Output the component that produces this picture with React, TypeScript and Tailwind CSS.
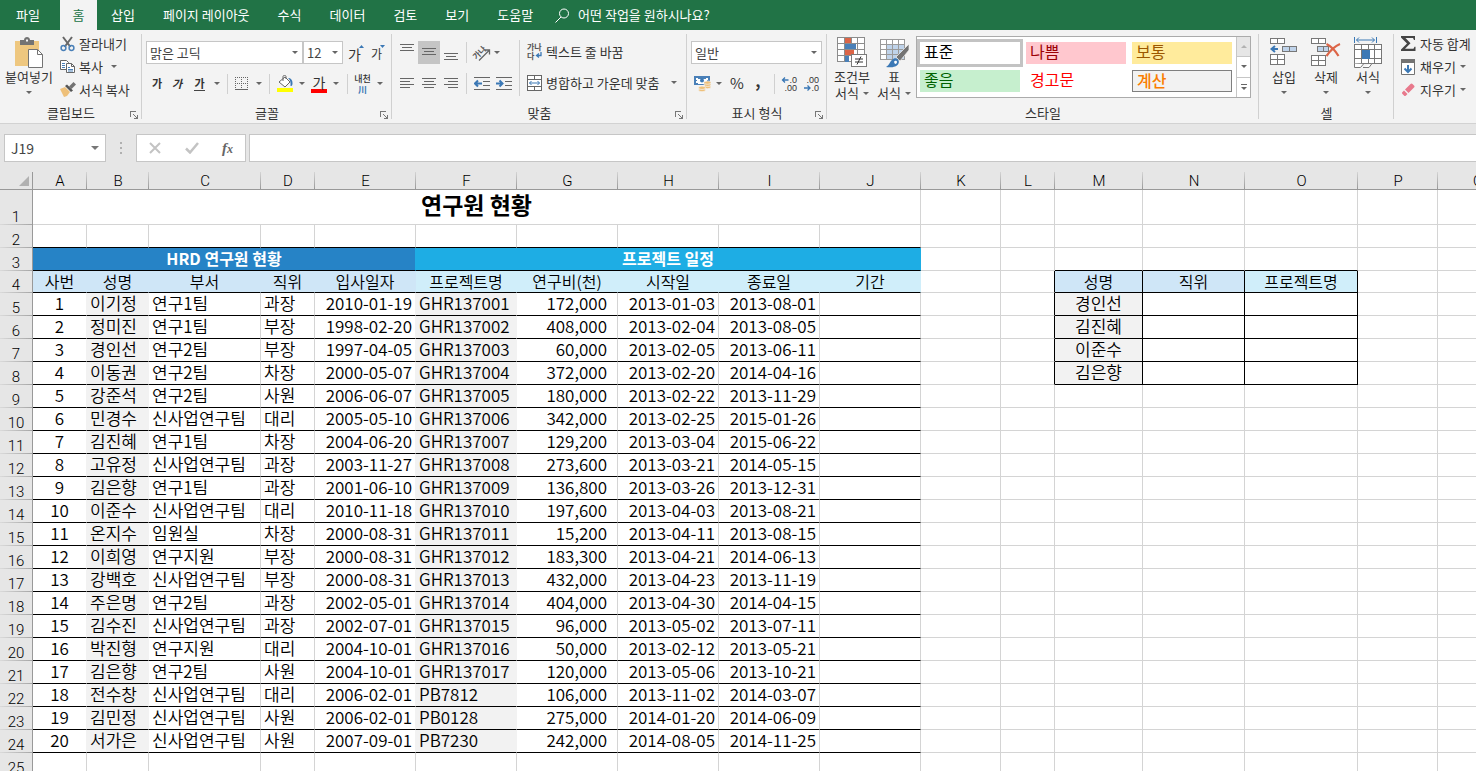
import type { ReactNode } from 'react';

type Researcher = [string, string, string, string, string, string, string, string];

const researchers: Researcher[] = [
  ['이기정', '연구1팀', '과장', '2010-01-19', 'GHR137001', '172,000', '2013-01-03', '2013-08-01'],
  ['정미진', '연구1팀', '부장', '1998-02-20', 'GHR137002', '408,000', '2013-02-04', '2013-08-05'],
  ['경인선', '연구2팀', '부장', '1997-04-05', 'GHR137003', '60,000', '2013-02-05', '2013-06-11'],
  ['이동권', '연구2팀', '차장', '2000-05-07', 'GHR137004', '372,000', '2013-02-20', '2014-04-16'],
  ['강준석', '연구2팀', '사원', '2006-06-07', 'GHR137005', '180,000', '2013-02-22', '2013-11-29'],
  ['민경수', '신사업연구팀', '대리', '2005-05-10', 'GHR137006', '342,000', '2013-02-25', '2015-01-26'],
  ['김진혜', '연구1팀', '차장', '2004-06-20', 'GHR137007', '129,200', '2013-03-04', '2015-06-22'],
  ['고유정', '신사업연구팀', '과장', '2003-11-27', 'GHR137008', '273,600', '2013-03-21', '2014-05-15'],
  ['김은향', '연구1팀', '과장', '2001-06-10', 'GHR137009', '136,800', '2013-03-26', '2013-12-31'],
  ['이준수', '신사업연구팀', '대리', '2010-11-18', 'GHR137010', '197,600', '2013-04-03', '2013-08-21'],
  ['온지수', '임원실', '차장', '2000-08-31', 'GHR137011', '15,200', '2013-04-11', '2013-08-15'],
  ['이희영', '연구지원', '부장', '2000-08-31', 'GHR137012', '183,300', '2013-04-21', '2014-06-13'],
  ['강백호', '신사업연구팀', '부장', '2000-08-31', 'GHR137013', '432,000', '2013-04-23', '2013-11-19'],
  ['주은명', '연구2팀', '과장', '2002-05-01', 'GHR137014', '404,000', '2013-04-30', '2014-04-15'],
  ['김수진', '신사업연구팀', '과장', '2002-07-01', 'GHR137015', '96,000', '2013-05-02', '2013-07-11'],
  ['박진형', '연구지원', '대리', '2004-10-01', 'GHR137016', '50,000', '2013-02-12', '2013-05-21'],
  ['김은향', '연구2팀', '사원', '2004-10-01', 'GHR137017', '120,000', '2013-05-06', '2013-10-21'],
  ['전수창', '신사업연구팀', '대리', '2006-02-01', 'PB7812', '106,000', '2013-11-02', '2014-03-07'],
  ['김민정', '신사업연구팀', '사원', '2006-02-01', 'PB0128', '275,000', '2014-01-20', '2014-06-09'],
  ['서가은', '신사업연구팀', '사원', '2007-09-01', 'PB7230', '242,000', '2014-08-05', '2014-11-25'],
];

const lookupNames = ['경인선', '김진혜', '이준수', '김은향'];
const columns = 'ABCDEFGHIJKLMNOPQ'.split('');
const tabs = ['삽입', '페이지 레이아웃', '수식', '데이터', '검토', '보기', '도움말'];

function Arrow({ className = '' }: { className?: string }) {
  return (
    <svg width="6" height="3" viewBox="0 0 6 3" className={`shrink-0 fill-[#666] ${className}`}>
      <path d="M0 0h6L3 3z" />
    </svg>
  );
}

function Divider({ className = 'h-5' }: { className?: string }) {
  return <span className={`w-px shrink-0 bg-[#d0d0d0] ${className}`} />;
}

function Group({ label, className, launcher = true, children }: { label: string; className: string; launcher?: boolean; children: ReactNode }) {
  return (
    <section aria-label={label} className={`relative flex shrink-0 flex-col ${className}`}>
      <div className="flex h-[74px] pt-[2px]">{children}</div>
      <div className="text-center leading-5">{label}</div>
      <span className="absolute top-1 right-0 h-[85px] w-px bg-[#d0d0d0]" />
      {launcher && (
        <button aria-label={`${label} 설정`} className="absolute right-1 bottom-1">
          <svg width="8" height="8" viewBox="0 0 8 8" fill="none" stroke="#777" shapeRendering="crispEdges">
            <path d="M.5 6V.5H6M3 3l4 4M7.5 3.5v4h-4" />
          </svg>
        </button>
      )}
    </section>
  );
}

/* clipboard icons */
function PasteIcon() {
  return (
    <svg width="30" height="32" viewBox="0 0 30 32">
      <path d="M1 4h24v25H1z" fill="#eec77f" />
      <path d="M6 3h4c0-4 6-4 6 0h4v5H6z" fill="#737373" />
      <path d="M12 2.500h2v2h-2z" fill="#f3f3f3" />
      <path d="M14.500 12.500h9l5 5v13h-14z" fill="#fff" stroke="#737373" />
      <path d="M23.500 12.500v5h5" fill="none" stroke="#737373" />
    </svg>
  );
}

function CutIcon() {
  return (
    <svg width="16" height="16" viewBox="0 0 16 16" fill="none">
      <path d="M3 1l7.500 10M12 1L4.500 11" stroke="#666" strokeWidth="2" />
      <circle cx="3.500" cy="12" r="2.400" stroke="#4a80b8" strokeWidth="1.500" />
      <circle cx="11.500" cy="12" r="2.400" stroke="#4a80b8" strokeWidth="1.500" />
    </svg>
  );
}

function CopyIcon() {
  return (
    <svg width="16" height="15" viewBox="0 0 16 15" fill="#fff" stroke="#666">
      <path d="M.5 1.500h6l2 2v7h-8z" />
      <path d="M2 4.500h3M2 6.500h3M2 8.500h3" stroke="#4a80b8" />
      <path d="M6.500 4.500h5l3 3v6h-8z" />
      <path d="M11.500 4.500v3h3" fill="none" />
      <path d="M8 8.500h2M8 10.500h5M8 12h5" stroke="#4a80b8" />
    </svg>
  );
}

function BrushIcon() {
  return (
    <svg width="16" height="15" viewBox="0 0 16 15">
      <path d="M0 7l5-2 5 5-3 4-3 1z" fill="#eec07a" />
      <path d="M5 4l2-1.500 6 6L11 10z" fill="#555" />
      <path d="M9 4.500L13.500 0 16 2.500 11.500 7z" fill="#737373" />
    </svg>
  );
}

/* horizontal strokes, each given as [x, y, length] */
function LinesIcon({ lines }: { lines: number[][] }) {
  return (
    <svg width="14" height="15" viewBox="0 0 14 15" stroke="#666" shapeRendering="crispEdges">
      {lines.map(([x, y, w]) => (
        <path key={y} d={`M${x} ${y}.5h${w}`} />
      ))}
    </svg>
  );
}

function IndentIcon({ right = false }: { right?: boolean }) {
  return (
    <svg width="17" height="14" viewBox="0 0 17 14">
      <path d="M0 .5h16M9 4.500h7M9 8.500h7M0 12.500h16" stroke="#666" shapeRendering="crispEdges" />
      <path d={right ? 'M0 6.500h6M3.500 3.500l3 3-3 3' : 'M1.500 6.500H8M4 3.500l-3 3 3 3'} fill="none" stroke="#3b78b5" strokeWidth="2" />
    </svg>
  );
}

function OrientationIcon() {
  return (
    <svg width="17" height="16" viewBox="0 0 17 16" className="overflow-visible">
      <text x="-2" y="11" fontSize="8" fontWeight="bold" fill="#555" transform="rotate(-45 5 8)">가나</text>
      <path d="M5 15.500L15 5.500M11 5h4.500v4.500" fill="none" stroke="#666" strokeWidth="1.300" />
    </svg>
  );
}

function WrapIcon() {
  return (
    <svg width="16" height="17" viewBox="0 0 16 17" className="overflow-visible">
      <text x="0" y="7" fontSize="8" fontWeight="bold" fill="#555">가나</text>
      <text x="0" y="16" fontSize="8" fontWeight="bold" fill="#555">다</text>
      <path d="M14 9v3.500h-4M12 10.500l-2.500 2 2.500 2" fill="none" stroke="#3b78b5" strokeWidth="1.300" />
    </svg>
  );
}

function MergeIcon() {
  return (
    <svg width="16" height="16" viewBox="0 0 16 16">
      <path d="M.5.5h14v15H.5zM.5 4.500h14M.5 11.500h14M7.500.5v4M7.500 11.500v4" fill="#fff" stroke="#666" shapeRendering="crispEdges" />
      <path d="M2.500 8h10M4.500 6l-2 2 2 2M10.500 6l2 2-2 2" fill="none" stroke="#3b78b5" />
    </svg>
  );
}

function BorderIcon() {
  return (
    <svg width="14" height="14" viewBox="0 0 14 14" fill="none" stroke="#666" shapeRendering="crispEdges">
      <path d="M.5 0v12M6.500 0v12M12.500 0v12M0 .5h13M0 6.500h13" strokeDasharray="1 1" />
      <path d="M0 12.500h13" />
    </svg>
  );
}

function FillIcon() {
  return (
    <svg width="16" height="17" viewBox="0 0 16 17">
      <path d="M2 7l6-5 5 5-5 5z" fill="#fff" stroke="#666" />
      <path d="M6 6V1.500c0-1.500 3-1.500 3 0V4" fill="none" stroke="#666" />
      <path d="M11 3c3 0 4.500 2 4.500 5s-1 3-2 3c0-3 .5-5-2.500-8z" fill="#3b78b5" />
      <path d="M0 13h16v4H0z" fill="#ff0" />
    </svg>
  );
}

function MoneyIcon() {
  return (
    <svg width="18" height="17" viewBox="0 0 18 17">
      <path d="M0 1h16v9H0z" fill="#4a80b8" />
      <path d="M2 3h2v1h8V3h2v2h-1v2h-3v2H4V8H2V6h1V5H2z" fill="#fff" />
      <circle cx="8" cy="5.500" r="2" fill="#3b78b5" />
      <g fill="#eec07a" stroke="#f3f3f3" strokeWidth=".7">
        <ellipse cx="13.500" cy="12" rx="3.500" ry="1.700" />
        <ellipse cx="13.500" cy="9.800" rx="3.500" ry="1.700" />
        <ellipse cx="13.500" cy="7.600" rx="3.500" ry="1.700" />
        <ellipse cx="8" cy="15" rx="3.500" ry="1.700" />
        <ellipse cx="8" cy="12.800" rx="3.500" ry="1.700" />
      </g>
    </svg>
  );
}

function DecimalIcon({ less = false }: { less?: boolean }) {
  return (
    <svg width="16" height="16" viewBox="0 0 16 16" className="overflow-visible font-[Liberation_Sans,sans-serif]">
      <text x="15" y="7" fontSize="9" textAnchor="end" fill="#333">{less ? '.00' : '.0'}</text>
      <text x="15" y="15" fontSize="9" textAnchor="end" fill="#333">{less ? '.0' : '.00'}</text>
      <path d={less ? 'M0 12h6M3.500 9.500L6 12l-2.500 2.500' : 'M.5 4h6M3 1.500L.5 4 3 6.500'} fill="none" stroke="#3b78b5" strokeWidth="1.300" />
    </svg>
  );
}

function ConditionalIcon() {
  return (
    <svg width="31" height="31" viewBox="0 0 31 31" shapeRendering="crispEdges">
      <path d="M.5.5h27v24H.5z" fill="#fff" />
      <path d="M.5.5h27v24H.5zM.5 6.500h27M.5 12.500h27M.5 18.500h27M7.500 0v25M14.500 0v25M20.500 0v25" fill="none" stroke="#8c8c8c" />
      <path d="M8 1h6v5H8zM8 13h9v5H8z" fill="#dc6547" />
      <path d="M8 7h11v5H8zM8 19h4v6H8z" fill="#4a80b8" />
      <path d="M14.500 17.500h15v12h-15z" fill="#fff" stroke="#7a7a7a" />
      <path d="M18 22h8M18 25h8M24 19.500l-4 8" stroke="#333" shapeRendering="auto" />
    </svg>
  );
}

function TableStyleIcon() {
  return (
    <svg width="31" height="31" viewBox="0 0 31 31">
      <path d="M1 2h24v20H1z" fill="#fff" />
      <path d="M7 8h18v14H7z" fill="#bfd3ea" />
      <path d="M1.500 2.500h24v20h-24zM1.500 7.500h24M1.500 12.500h24M1.500 17.500h24M7.500 2.500v20M13.500 2.500v20M19.500 2.500v20" fill="none" stroke="#9a9a9a" shapeRendering="crispEdges" />
      <path d="M30 7v6l-9 11-4-4z" fill="#737373" stroke="#f3f3f3" strokeWidth=".7" />
      <path d="M7 30c4-2 4-7 8-8.500 3-1 6 2 4.500 5C18 30 12 31 7 30z" fill="#3b78b5" />
      <path d="M15 25c1-2 3-1 3 0s-1 2-2 2z" fill="#fff" />
    </svg>
  );
}

function InsertCellsIcon() {
  return (
    <svg width="28" height="31" viewBox="0 0 28 31" fill="#fff" stroke="#777" shapeRendering="crispEdges">
      <path d="M.5 1.500h14v5H.5zM7.500 1.500v5M.5 17.500h14v10H.5zM.5 22.500h14M7.500 17.500v10" />
      <path d="M12.500 9.500h14v5h-14zM19.500 9.500v5" fill="#bfd3ea" />
      <path d="M2 12h6M5 9l-3.500 3L5 15" fill="none" stroke="#3b78b5" strokeWidth="2" shapeRendering="auto" />
    </svg>
  );
}

function DeleteCellsIcon() {
  return (
    <svg width="30" height="31" viewBox="0 0 30 31" fill="#fff" stroke="#777">
      <path d="M.5 1.500h14v5H.5zM7.500 1.500v5M.5 18.500h14v10H.5zM.5 23.500h14M7.500 18.500v10" shapeRendering="crispEdges" />
      <path d="M6.500 9.500h11v5h-11zM12.500 9.500v5" fill="#bfd3ea" shapeRendering="crispEdges" />
      <path d="M15.500 7c4 2 9 7 12 12M29 7c-5 2-10 7-13.500 12" fill="none" stroke="#dc6547" strokeWidth="2.200" />
    </svg>
  );
}

function FormatCellsIcon() {
  return (
    <svg width="29" height="32" viewBox="0 0 29 32" fill="#fff" stroke="#777">
      <path d="M.5 7.500h27v19H.5zM.5 12.500h27M.5 21.500h27M7.500 7.500v19M14.500 7.500v5M20.500 7.500v19M14.500 21.500v5" shapeRendering="crispEdges" />
      <path d="M8 13h8v9H8z" fill="#3b78b5" stroke="none" />
      <path d="M.5 26.500v4h6l3-3.500M9 30.500h6l3-4" />
      <path d="M.5 0v6M22.500 0v6M2.500 3h18M5 .5L2.500 3 5 5.500M18 .5L20.500 3 18 5.500" fill="none" stroke="#3b78b5" />
    </svg>
  );
}

function SumIcon() {
  return (
    <svg width="16" height="15" viewBox="0 0 16 15">
      <path d="M0 0h14v4h-1l-1-2H4.500l5 5.300L4 12.800h8.500l1-2h1V15H0v-1.500L6 7.500 0 1.500z" fill="#444" />
    </svg>
  );
}

function FillDownIcon() {
  return (
    <svg width="14" height="16" viewBox="0 0 14 16">
      <path d="M.5.5h13v15H.5z" fill="#fff" stroke="#737373" />
      <path d="M0 0h14v4H0z" fill="#737373" />
      <path d="M7 6v7M3.500 9.500L7 13l3.500-3.500" fill="none" stroke="#3b78b5" strokeWidth="2" />
    </svg>
  );
}

function EraserIcon() {
  return (
    <svg width="14" height="14" viewBox="0 0 14 14" fill="#e8798c">
      <path d="M4 6.500L9.500 1c.7-.7 1.500-.7 2 0l1.500 1.500c.7.600.7 1.300 0 2L7.500 10z" />
      <path d="M3 7.500L6.500 11 5 12.500c-.7.700-1.500.7-2 0L1.500 11c-.7-.6-.7-1.300 0-2z" />
    </svg>
  );
}

function BigButton({ icon, lines, inline = false, className }: { icon: ReactNode; lines: string[]; inline?: boolean; className: string }) {
  return (
    <button className={`flex shrink-0 flex-col items-center pt-[5px] leading-4 ${className}`}>
      <span className="flex h-8 items-start">{icon}</span>
      <span className="whitespace-nowrap">{lines[0]}</span>
      {inline ? (
        <span className="flex items-center gap-1">
          {lines[1]} <Arrow />
        </span>
      ) : (
        <Arrow className="mt-[6px]" />
      )}
    </button>
  );
}

function SmallButton({ icon, label, arrow = false }: { icon: ReactNode; label: string; arrow?: boolean }) {
  return (
    <button className="flex h-[23px] items-center whitespace-nowrap">
      <span className="flex w-[19px] items-center">{icon}</span>
      {label}
      {arrow && <Arrow className="ml-1" />}
    </button>
  );
}

function Combo({ label, value, className }: { label: string; value: string; className: string }) {
  return (
    <span className={`relative flex h-[23px] items-center border border-[#c6c6c6] bg-white ${className}`}>
      <select aria-label={label} className="h-full w-full appearance-none bg-transparent pl-[3px] text-[#444] outline-none">
        <option>{value}</option>
      </select>
      <Arrow className="pointer-events-none absolute right-1" />
    </span>
  );
}

function Ribbon() {
  return (
    <div className="flex h-[94px] overflow-hidden border-b border-[#d2d2d2] bg-[#f3f3f3] text-[#333]">
      <Group label="클립보드" className="w-[142px]">
        <BigButton icon={<PasteIcon />} lines={['붙여넣기']} className="w-[58px]" />
        <div className="flex flex-col pl-[2px]">
          <SmallButton icon={<CutIcon />} label="잘라내기" />
          <button className="flex h-[23px] items-center">
            <span className="flex w-[19px]"><CopyIcon /></span>
            복사
            <Arrow className="ml-2" />
          </button>
          <SmallButton icon={<BrushIcon />} label="서식 복사" />
        </div>
      </Group>

      <Group label="글꼴" className="w-[250px]">
        <div className="flex flex-col pl-1">
          <div className="mt-[9px] flex">
            <Combo label="글꼴" value="맑은 고딕" className="w-[157px]" />
            <Combo label="글꼴 크기" value="12" className="w-10" />
            <button className="relative ml-[5px] w-4 pt-[2px] text-left text-sm" aria-label="글꼴 크기 크게">
              가
              <svg width="5" height="3" className="absolute top-1 right-0 fill-[#3b78b5]"><path d="M0 3h5L2.500 0z" /></svg>
            </button>
            <button className="relative ml-[7px] w-4 pt-[3px] text-left text-xs" aria-label="글꼴 크기 작게">
              가
              <svg width="5" height="3" className="absolute top-1 right-[2px] fill-[#3b78b5]"><path d="M0 0h5L2.500 3z" /></svg>
            </button>
          </div>
          <div className="mt-2 flex h-[23px] items-center pl-1">
            <button className="w-[22px] pr-2 text-[11px] font-bold">가</button>
            <button className="w-[22px] pr-3 text-[11px] font-bold italic">가</button>
            <button className="mr-3 w-[11px] border-b border-[#444] text-[11px] leading-[13px] font-bold">가</button>
            <Arrow className="-ml-[3px]" />
            <Divider className="mr-[7px] ml-[7px] h-5" />
            <button aria-label="테두리"><BorderIcon /></button>
            <Arrow className="mx-[7px]" />
            <Divider />
            <button aria-label="채우기 색" className="ml-[7px]"><FillIcon /></button>
            <Arrow className="mx-[6px]" />
            <button aria-label="글꼴 색" className="w-4 border-b-4 border-[#f00] text-sm leading-[14px]">가</button>
            <Arrow className="mr-2 ml-[6px]" />
            <Divider />
            <button className="ml-[6px] flex w-[17px] flex-col items-center text-[9px] leading-[11px] font-medium whitespace-nowrap">
              내천
              <span className="font-bold text-[#3b78b5]">川</span>
            </button>
            <Arrow className="ml-[6px]" />
          </div>
        </div>
      </Group>

      <Group label="맞춤" className="w-[295px]">
        <div className="flex flex-col pl-1">
          <div className="mt-[9px] flex h-[23px] items-center">
            <button aria-label="위쪽 맞춤" className="flex h-[23px] w-[22px] justify-center pt-[3px]"><LinesIcon lines={[[0, 0, 14], [2, 3, 10], [0, 6, 14]]} /></button>
            <button aria-label="가운데 맞춤" className="flex h-[23px] w-[22px] justify-center bg-[#c5c5c5] pt-[3px]"><LinesIcon lines={[[0, 4, 14], [2, 7, 10], [0, 10, 14]]} /></button>
            <button aria-label="아래쪽 맞춤" className="flex h-[23px] w-[22px] items-end justify-center pb-px"><LinesIcon lines={[[0, 5, 14], [2, 8, 10], [0, 11, 14]]} /></button>
            <Divider className="mr-[7px] ml-1 h-[21px]" />
            <button aria-label="방향"><OrientationIcon /></button>
            <Arrow className="ml-[3px]" />
          </div>
          <div className="mt-2 flex h-[23px] items-center">
            <button aria-label="왼쪽 맞춤" className="flex w-[22px] justify-center"><LinesIcon lines={[[0, 2, 14], [0, 5, 10], [0, 8, 14], [0, 11, 10]]} /></button>
            <button aria-label="가로 가운데 맞춤" className="flex w-[22px] justify-center"><LinesIcon lines={[[0, 2, 14], [2, 5, 10], [0, 8, 14], [2, 11, 10]]} /></button>
            <button aria-label="오른쪽 맞춤" className="flex w-[22px] justify-center"><LinesIcon lines={[[0, 2, 14], [4, 5, 10], [0, 8, 14], [4, 11, 10]]} /></button>
            <Divider className="mr-[7px] ml-1 h-[21px]" />
            <button aria-label="내어쓰기"><IndentIcon /></button>
            <button aria-label="들여쓰기" className="ml-[5px]"><IndentIcon right /></button>
          </div>
        </div>
        <Divider className="mt-2 ml-[6px] h-14" />
        <div className="flex flex-col gap-2 pt-2 pl-[7px]">
          <SmallButton icon={<WrapIcon />} label="텍스트 줄 바꿈" />
          <button className="flex h-[23px] items-center whitespace-nowrap">
            <span className="flex w-[19px]"><MergeIcon /></span>
            병합하고 가운데 맞춤
            <Arrow className="ml-3" />
          </button>
        </div>
      </Group>

      <Group label="표시 형식" className="w-[140px]">
        <div className="flex flex-col pt-[9px] pl-1">
          <Combo label="표시 형식" value="일반" className="w-[131px]" />
          <div className="mt-2 flex h-[23px] items-center pl-[3px]">
            <button aria-label="회계 표시 형식"><MoneyIcon /></button>
            <Arrow className="ml-1" />
            <button className="ml-2 text-[15px]">%</button>
            <button className="ml-[10px] w-2 pb-2 text-base leading-4 font-bold">,</button>
            <Divider className="mr-[7px] ml-3 h-5" />
            <button aria-label="자릿수 늘림"><DecimalIcon /></button>
            <button aria-label="자릿수 줄임" className="ml-[6px]"><DecimalIcon less /></button>
          </div>
        </div>
      </Group>

      <Group label="스타일" className="w-[432px]" launcher={false}>
        <BigButton icon={<ConditionalIcon />} lines={['조건부', '서식']} inline className="ml-1 w-[42px]" />
        <BigButton icon={<TableStyleIcon />} lines={['표', '서식']} inline className="w-[42px]" />
        <div className="mt-1 ml-px flex h-[62px] border border-[#ababab] bg-white text-[16px] text-black">
          <div className="grid grid-cols-[100px_100px_100px] grid-rows-[22px_22px] gap-[6px] pt-[5px] pr-1 pl-[3px] leading-[18px] *:px-1 *:pb-1 *:text-left">
            <button className="bg-white ring-3 ring-[#c3c3c3]">표준</button>
            <button className="bg-[#ffc7ce] text-[#9c0006]">나쁨</button>
            <button className="bg-[#ffeb9c] text-[#9c5700]">보통</button>
            <button className="bg-[#c6efce] text-[#006100]">좋음</button>
            <button className="text-[#f00]">경고문</button>
            <button className="border border-[#7f7f7f] bg-[#f2f2f2] font-medium text-[#fa7d00]">계산</button>
          </div>
          <div className="flex w-[14px] flex-col border-l border-[#c6c6c6] *:flex *:flex-1 *:flex-col *:items-center *:justify-center">
            <button aria-label="위로" className="bg-[#e6e6e6]"><Arrow className="rotate-180 opacity-40" /></button>
            <button aria-label="아래로" className="border-y border-[#c6c6c6]"><Arrow /></button>
            <button aria-label="자세히"><span className="mb-[2px] h-px w-[6px] bg-[#666]" /><Arrow /></button>
          </div>
        </div>
      </Group>

      <Group label="셀" className="w-[135px]" launcher={false}>
        <BigButton icon={<InsertCellsIcon />} lines={['삽입']} className="ml-1 w-[42px]" />
        <BigButton icon={<DeleteCellsIcon />} lines={['삭제']} className="w-[42px]" />
        <BigButton icon={<FormatCellsIcon />} lines={['서식']} className="w-[42px]" />
      </Group>

      <div className="flex shrink-0 flex-col pt-[2px] pl-[7px]">
        <SmallButton icon={<SumIcon />} label="자동 합계" />
        <SmallButton icon={<FillDownIcon />} label="채우기" arrow />
        <SmallButton icon={<EraserIcon />} label="지우기" arrow />
      </div>
    </div>
  );
}

function FormulaBar() {
  return (
    <div className="flex h-12 items-center">
      <div className="relative ml-1 flex h-7 w-[102px] items-center border border-[#c6c6c6] bg-white">
        <input aria-label="이름 상자" defaultValue="J19" className="w-full bg-transparent px-[6px] text-sm text-[#444] outline-none" />
        <svg width="8" height="4" className="absolute right-[6px] fill-[#777]"><path d="M0 0h8L4 4z" /></svg>
      </div>
      <div className="flex w-[30px] flex-col items-center gap-[3px]">
        <span className="size-[2px] bg-[#b0b0b0]" />
        <span className="size-[2px] bg-[#b0b0b0]" />
        <span className="size-[2px] bg-[#b0b0b0]" />
      </div>
      <div className="flex h-7 w-[110px] items-center justify-between border border-[#c6c6c6] bg-white px-3">
        <button aria-label="취소">
          <svg width="12" height="12" viewBox="0 0 12 12" stroke="#c3c3c3" strokeWidth="2"><path d="M1 1l10 10M11 1L1 11" /></svg>
        </button>
        <button aria-label="입력">
          <svg width="14" height="12" viewBox="0 0 14 12" fill="none" stroke="#c3c3c3" strokeWidth="2.500"><path d="M1 6.500l4 4L13 1" /></svg>
        </button>
        <button className="font-[Liberation_Serif,serif] text-[15px] leading-5 font-bold text-[#666] italic">
          f<span className="text-xs">x</span>
        </button>
      </div>
      <input aria-label="수식 입력줄" className="ml-[3px] h-7 min-w-0 flex-1 border border-r-0 border-[#c6c6c6] bg-white px-2 outline-none" />
    </div>
  );
}

const line = 'border-r-[#d4d4d4] border-b-[#d4d4d4]';
const ruled = 'border-r-[#d4d4d4] border-b-black';
const boxed = 'border-r-black border-b-black';
const shaded = 'border-r-[#f2f2f2] border-b-black bg-[#f2f2f2]';
const blueHead = 'border-r-[#cfe6f7] border-b-black bg-[#cfe6f7] text-[16px] text-center';
const cyanHead = 'border-r-[#d0eefa] border-b-black bg-[#d0eefa] text-[16px] text-center';

function Cell({ className = line, span, children }: { className?: string; span?: number; children?: ReactNode }) {
  return (
    <td colSpan={span} className={`border-r border-b p-0 align-top whitespace-nowrap ${className}`}>
      {children}
    </td>
  );
}

function RowHeader({ n }: { n: number }) {
  return (
    <th scope="row" className="border-r border-[#999] bg-[#e6e6e6] bg-linear-to-r from-[#dadada] to-[#a6a6a6] bg-[length:100%_1px] bg-bottom bg-no-repeat p-0 align-bottom font-[Roboto,sans-serif] text-[15px] leading-4 font-light">
      {n}
    </th>
  );
}

/* columns K to Q; rows 4 to 8 hold the lookup table */
function SideCells({ row }: { row: number }) {
  if (row === 4) {
    return (
      <>
        <Cell />
        <Cell className="border-r-black border-b-[#d4d4d4]" />
        <Cell className={`${boxed} bg-[#cfe6f7] text-center text-[16px]`}>성명</Cell>
        <Cell className={`${boxed} bg-[#cfe6f7] text-center text-[16px]`}>직위</Cell>
        <Cell className={`${boxed} bg-[#d0eefa] text-center text-[16px]`}>프로젝트명</Cell>
        <Cell />
        <Cell />
      </>
    );
  }
  const name = lookupNames[row - 5];
  if (name) {
    return (
      <>
        <Cell />
        <Cell className="border-r-black border-b-[#d4d4d4]" />
        <Cell className={`${boxed} bg-[#f2f2f2] text-center`}>{name}</Cell>
        <Cell className={boxed} />
        <Cell className={boxed} />
        <Cell />
        <Cell />
      </>
    );
  }
  return (
    <>
      {columns.slice(10).map((c) => (
        <Cell key={c} className={row === 3 && 'MNO'.includes(c) ? ruled : line} />
      ))}
    </>
  );
}

function Sheet() {
  return (
    <div className="min-h-0 flex-1 overflow-hidden">
      <table className="w-[1518px] table-fixed border-separate border-spacing-0 bg-white text-[17px] leading-5 font-[350] text-black">
        <colgroup>
          <col className="w-[33px]" />
          <col className="w-[54px]" />
          <col className="w-[62px]" />
          <col className="w-[112px]" />
          <col className="w-[54px]" />
          <col span={6} className="w-[101px]" />
          <col className="w-20" />
          <col className="w-[54px]" />
          <col className="w-[88px]" />
          <col className="w-[102px]" />
          <col className="w-[113px]" />
          <col span={2} className="w-20" />
        </colgroup>
        <thead>
          <tr className="h-[18px] bg-[#e6e6e6]">
            <th className="border-r border-b border-[#999] p-0">
              <svg width="10" height="10" className="mr-[3px] ml-auto fill-[#b1b1b1]"><path d="M10 0v10H0z" /></svg>
            </th>
            {columns.map((c) => (
              <th key={c} scope="col" className="border-b border-[#999] bg-linear-to-b from-[#d4d4d4] to-[#999] bg-[length:1px_100%] bg-right bg-no-repeat px-0 pt-[2px] pb-0 font-[Roboto,sans-serif] text-[15px] leading-[15px] font-light">
                {c}
              </th>
            ))}
          </tr>
        </thead>
        <tbody>
          <tr className="h-[35px]">
            <RowHeader n={1} />
            <Cell span={10} className={`${line} text-center text-[23px] leading-7 font-bold`}>연구원 현황</Cell>
            <SideCells row={1} />
          </tr>
          <tr className="h-[23px]">
            <RowHeader n={2} />
            {columns.slice(0, 10).map((c) => <Cell key={c} className={ruled} />)}
            <SideCells row={2} />
          </tr>
          <tr className="h-[23px]">
            <RowHeader n={3} />
            <Cell span={5} className="border-r-[#1eade4] border-b-black bg-[#2683c6] text-center text-[16px] font-bold text-white">HRD 연구원 현황</Cell>
            <Cell span={5} className="border-r-[#1eade4] border-b-black bg-[#1eade4] text-center text-[16px] font-bold text-white">프로젝트 일정</Cell>
            <SideCells row={3} />
          </tr>
          <tr className="h-[22px]">
            <RowHeader n={4} />
            {['사번', '성명', '부서', '직위', '입사일자'].map((h) => <Cell key={h} className={blueHead}>{h}</Cell>)}
            {['프로젝트명', '연구비(천)', '시작일', '종료일', '기간'].map((h) => <Cell key={h} className={cyanHead}>{h}</Cell>)}
            <SideCells row={4} />
          </tr>
          {researchers.map(([name, team, rank, joined, project, cost, start, end], i) => (
            <tr key={i} className="h-[23px]">
              <RowHeader n={i + 5} />
              <Cell className="border-r-[#f2f2f2] border-b-black text-center">{i + 1}</Cell>
              <Cell className={`${shaded} pl-[3px]`}>{name}</Cell>
              <Cell className={`${ruled} pl-[3px]`}>{team}</Cell>
              <Cell className={`${ruled} pl-[3px]`}>{rank}</Cell>
              <Cell className="border-r-[#f2f2f2] border-b-black pr-[3px] text-right">{joined}</Cell>
              <Cell className={`${shaded} pl-[3px]`}>{project}</Cell>
              <Cell className={`${ruled} pr-[10px] text-right`}>{cost}</Cell>
              <Cell className={`${ruled} pr-[3px] text-right`}>{start}</Cell>
              <Cell className={`${ruled} pr-[3px] text-right`}>{end}</Cell>
              <Cell className={ruled} />
              <SideCells row={i + 5} />
            </tr>
          ))}
          <tr className="h-[23px]">
            <RowHeader n={25} />
            {columns.slice(0, 10).map((c) => <Cell key={c} />)}
            <SideCells row={25} />
          </tr>
        </tbody>
      </table>
    </div>
  );
}

export default function App() {
  return (
    <div className="flex h-screen flex-col overflow-hidden bg-[#e6e6e6] font-[Noto_Sans_CJK_KR,sans-serif] text-[13px]">
      <nav className="flex h-[30px] shrink-0 items-stretch bg-[#217346] text-white">
        <button className="w-[60px] pr-1">파일</button>
        <button className="w-[37px] bg-[#f3f3f3] text-[#217346]">홈</button>
        {tabs.map((tab) => (
          <button key={tab} className="px-[14px] whitespace-nowrap">{tab}</button>
        ))}
        <button className="flex items-center gap-2 pl-2 whitespace-nowrap">
          <svg width="15" height="15" viewBox="0 0 15 15" fill="none" stroke="#fff">
            <circle cx="9" cy="5.500" r="4.500" />
            <path d="M6 9L.5 14.500" />
          </svg>
          어떤 작업을 원하시나요?
        </button>
      </nav>
      <div className="shrink-0">
        <Ribbon />
        <FormulaBar />
      </div>
      <Sheet />
    </div>
  );
}
